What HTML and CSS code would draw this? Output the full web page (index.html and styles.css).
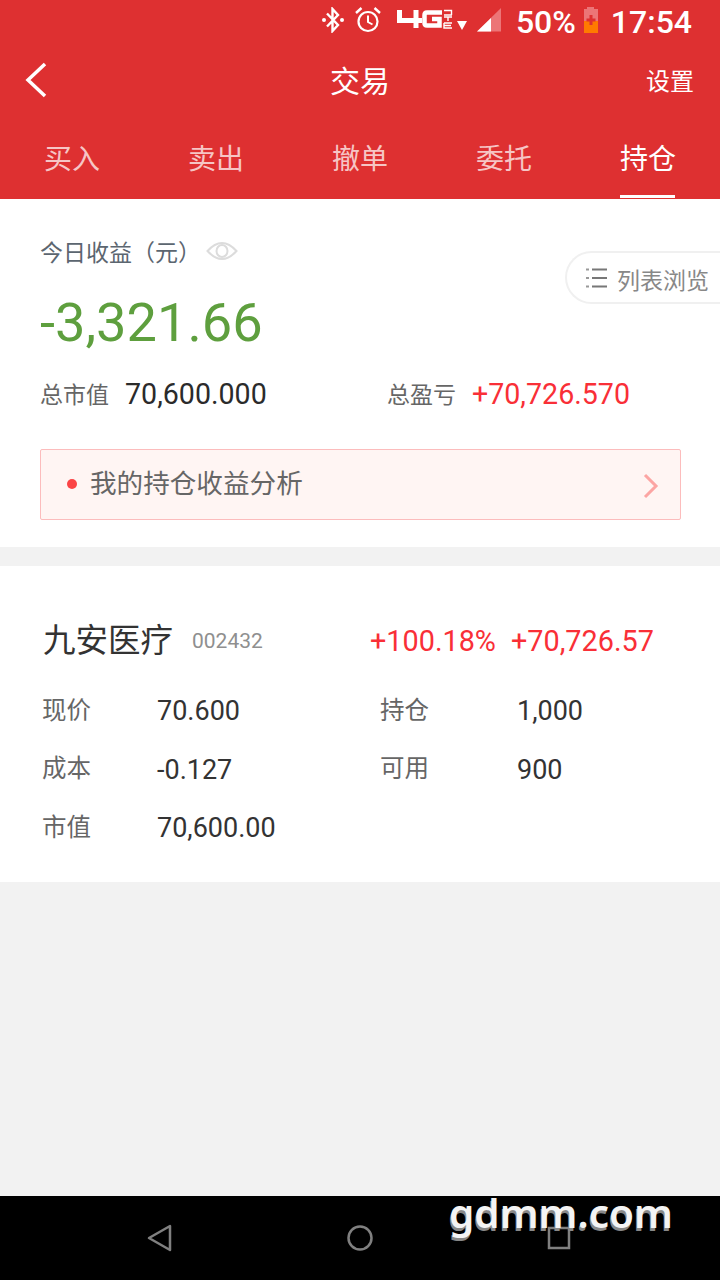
FILE: index.html
```html
<!DOCTYPE html>
<html lang="zh">
<head>
<meta charset="utf-8">
<title>交易</title>
<link rel="stylesheet" href="styles.css">
</head>
<body>
<div class="app">
  <header class="header">
    <div class="status">
      <svg class="ic ic-bt" width="22" height="26" viewBox="0 0 22 26"><path d="M5 6.500 L16 18 L10.500 24 V2 L16 8 L5 19.500" fill="none" stroke="#fff" stroke-width="2.400"/><circle cx="2" cy="13" r="2" fill="#fff"/><circle cx="20" cy="13" r="2" fill="#fff"/></svg>
      <svg class="ic ic-alarm" width="26" height="26" viewBox="0 0 26 26"><circle cx="13" cy="14.500" r="9.500" fill="none" stroke="#fff" stroke-width="2.200"/><path d="M13 8.500v6.500l4.500 2.500" fill="none" stroke="#fff" stroke-width="2"/><path d="M1 6 L6.500 1 M25 6 L19.500 1" stroke="#fff" stroke-width="2.400"/></svg>
      <svg class="ic ic-net" width="70" height="24" viewBox="0 0 70 24"><path d="M2.500 2V12.500H25M19 2V20" fill="none" stroke="#fff" stroke-width="5"/><path d="M45 4.500H30q-2.500 0-2.500 2.500V15q0 2.500 2.500 2.500H42.500V11H35" fill="none" stroke="#fff" stroke-width="4.500"/><path d="M47 2.500h7.500V7M47 7h8M51 9v4M47 9h8M47 15h8M47 15v5h8M47 17.500h7" fill="none" stroke="#fff" stroke-width="1.400"/><path d="M60 13h10l-5 9z" fill="#fff"/></svg>
      <svg class="ic ic-signal" width="24" height="24" viewBox="0 0 24 24"><path d="M0 23.500 L24 0 V23.500Z" fill="#ec7577"/><path d="M0 23.500 L14 10 V23.500Z" fill="#fff"/></svg>
      <span class="pct">50%</span>
      <svg class="ic ic-batt" width="16" height="26" viewBox="0 0 16 26"><path d="M4 0h7v2h4v12H1V2h3z" fill="#ec7577"/><rect x="1" y="14" width="14" height="12" fill="#ff7a00"/><path d="M8 8v10M3.500 13h9" stroke="#de3031" stroke-width="3"/></svg>
      <span class="time">17:54</span>
    </div>
    <div class="nav">
      <svg class="back" width="24" height="36" viewBox="0 0 24 36"><path d="M21 2 L4 18 L21 34" fill="none" stroke="#fff" stroke-width="3.500"/></svg>
      <h1 class="title">交易</h1>
      <span class="settings">设置</span>
    </div>
    <nav class="tabs">
      <span class="tab">买入</span>
      <span class="tab">卖出</span>
      <span class="tab">撤单</span>
      <span class="tab">委托</span>
      <span class="tab active">持仓</span>
    </nav>
  </header>

  <main class="main">
    <section class="summary">
      <div class="today"><span>今日收益（元）</span>
        <svg class="eye" width="32" height="20" viewBox="0 0 32 20"><path d="M1.500 10 Q16 -6 30.500 10 Q16 26 1.500 10Z" fill="none" stroke="#dcdcdc" stroke-width="2"/><ellipse cx="16" cy="10" rx="5.500" ry="6" fill="none" stroke="#dcdcdc" stroke-width="2"/></svg>
      </div>
      <div class="big">-3,321.66</div>
      <div class="totals">
        <div class="total t1"><span class="tl">总市值</span><span class="tv">70,600.000</span></div>
        <div class="total"><span class="tl">总盈亏</span><span class="tv red">+70,726.570</span></div>
      </div>
      <div class="analysis">
        <i class="dot"></i><span class="atext">我的持仓收益分析</span>
        <svg class="chev" width="16" height="26" viewBox="0 0 16 26"><path d="M2 2 L13 13 L2 24" fill="none" stroke="#fca5a3" stroke-width="3"/></svg>
      </div>
      <div class="pill">
        <svg width="22" height="22" viewBox="0 0 22 22"><path d="M6 2.500h15M6 11h15M6 19.500h15" stroke="#777" stroke-width="2"/><path d="M0 2.500h3M0 11h3M0 19.500h3" stroke="#999" stroke-width="2"/></svg>
        <span>列表浏览</span>
      </div>
    </section>

    <section class="card">
      <div class="head">
        <span class="name">九安医疗</span><span class="code">002432</span>
        <span class="pctv">+100.18%</span><span class="profit">+70,726.57</span>
      </div>
      <div class="grid">
        <span class="k">现价</span><span class="v">70.600</span><span class="k">持仓</span><span class="v">1,000</span>
        <span class="k">成本</span><span class="v">-0.127</span><span class="k">可用</span><span class="v">900</span>
        <span class="k">市值</span><span class="v">70,600.00</span>
      </div>
    </section>
  </main>

  <footer class="sysnav">
    <svg width="26" height="28" viewBox="0 0 26 28"><path d="M23 2 V26 L2 14Z" fill="none" stroke="#808080" stroke-width="2.500" stroke-linejoin="round"/></svg>
    <svg width="26" height="26" viewBox="0 0 26 26"><circle cx="13" cy="13" r="11.500" fill="none" stroke="#808080" stroke-width="2.500"/></svg>
    <svg width="24" height="24" viewBox="0 0 24 24"><rect x="2" y="2" width="20" height="20" fill="none" stroke="#808080" stroke-width="2.500"/></svg>
  </footer>
  <div class="mark">gdmm.com</div>
</div>
</body>
</html>
```
FILE: styles.css
```css
* { box-sizing: border-box; }
html, body { margin: 0; padding: 0; }
body { font-family: Roboto, "Noto Sans CJK SC", sans-serif; background: #f2f2f2; }
.app { position: relative; width: 720px; height: 1280px; display: flex; flex-direction: column; overflow: hidden; }

.header { background: #de3031; color: #fff; height: 199px; flex: none; }
.status { height: 44px; display: flex; align-items: center; justify-content: flex-end; padding-right: 28px; }
.ic { margin-bottom: 4px; }
.ic-bt { margin-right: 11px; }
.ic-alarm { margin-right: 16px; }
.ic-net { margin-right: 10px; }
.ic-signal { margin-right: 15px; }
.pct { font-size: 32px; font-weight: 500; margin-right: 7px; }
.ic-batt { margin-right: 12px; }
.time { font-size: 32px; font-weight: 500; }

.nav { height: 72px; display: flex; align-items: center; justify-content: space-between; padding: 0 26px 0 24px; position: relative; }
.title { position: absolute; left: 0; right: 0; text-align: center; margin: 0 0 2px; font-size: 30px; font-weight: 400; }
.settings { font-size: 24px; margin-bottom: 2px; }

.tabs { display: grid; grid-template-columns: repeat(5, 144px); height: 83px; }
.tab { display: flex; align-items: center; justify-content: center; position: relative; font-size: 28px; color: #f6c5c5; padding-bottom: 2px; }
.tab.active { color: #fff; }
.tab.active::after { content: ""; position: absolute; left: 44px; width: 55px; bottom: 1px; height: 3px; background: #fff; }

.main { flex: 1; display: flex; flex-direction: column; gap: 19px; }
.summary { position: relative; background: #fff; height: 348px; padding: 34px 39px 0 40px; }
.today { display: flex; align-items: center; gap: 5px; height: 36px; font-size: 23px; color: #5c6670; }
.big { font-size: 54.200px; line-height: 60px; color: #5e9f3e; margin-top: 24px; }
.totals { display: flex; margin-top: 21px; height: 40px; align-items: center; }
.total { display: flex; align-items: center; gap: 16px; }
.t1 { width: 347px; }
.tl { font-size: 23px; color: #666; margin-bottom: 3px; }
.tv { font-size: 28.600px; color: #2b2b2b; }
.red { color: #f92f37; }
.analysis { margin-top: 35px; height: 71px; display: flex; align-items: center; background: #fff5f3; border: 1px solid #fcbcbc; border-radius: 2px; padding: 0 21px 0 26px; font-size: 26.600px; color: #666; }
.dot { width: 10px; height: 10px; border-radius: 50%; background: #fb4445; margin-right: 13px; margin-top: -2px; }
.atext { flex: 1; padding-bottom: 6px; }
.chev { margin-top: 2px; }
.pill { position: absolute; right: 0; top: 52px; width: 155px; height: 53px; display: flex; align-items: center; gap: 9px; padding-left: 19px; border: 2px solid #f0f0f0; border-right: 0; border-radius: 27px 0 0 27px; font-size: 23px; color: #888; white-space: nowrap; background: #fff; }
.pill span { margin-top: 2px; }

.card { background: #fff; height: 316px; padding: 51px 0 0 43px; }
.head { display: flex; align-items: center; height: 48px; }
.name { font-size: 32.500px; color: #333; width: 149px; margin-bottom: 8px; white-space: nowrap; }
.code { font-size: 21px; color: #8f8f8f; width: 178px; }
.pctv { font-size: 28.800px; color: #f92f37; width: 141px; }
.profit { font-size: 28.800px; color: #f92f37; }
.grid { display: grid; grid-template-columns: 115px 223px 137px 1fr; grid-auto-rows: 58.500px; margin: 17px 0 0 -1px; align-items: center; }
.k { font-size: 24.500px; color: #666; margin-bottom: 6px; }
.v { font-size: 27px; color: #333; }

.sysnav { flex: none; height: 84px; background: #000; display: flex; align-items: center; justify-content: space-between; padding: 0 149px 0 147px; }
.sysnav svg { margin-top: -1px; }
.mark { position: absolute; left: 449px; top: 1188px; font-family: "Noto Sans", sans-serif; font-size: 40.500px; line-height: 50px; font-weight: 600; color: #f4f4f4; text-shadow: -1px 3px 0 #888; }
```
